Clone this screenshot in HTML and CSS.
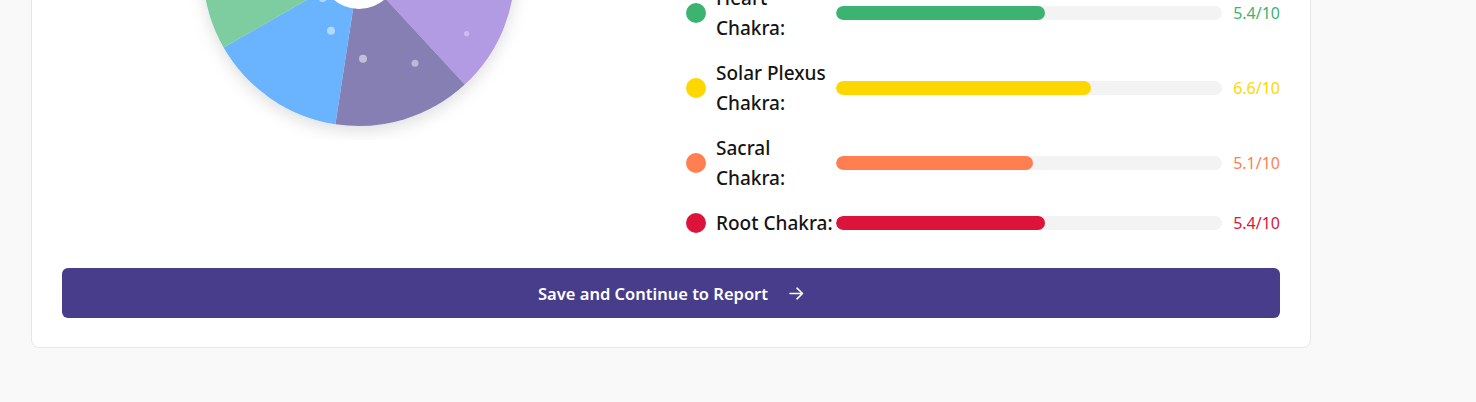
FILE: index.html
```html
<!DOCTYPE html>
<html lang="en">
<head>
<meta charset="utf-8">
<title>Chakra Results</title>
<link rel="stylesheet" href="styles.css">
</head>
<body>
<main class="page">
  <section class="card">
    <div class="results">
      <div class="chart-col">
        <svg class="pie" width="340" height="340" viewBox="0 0 340 340" aria-hidden="true">
          <defs>
            <filter id="shadow" x="-20%" y="-20%" width="140%" height="140%">
              <feDropShadow dx="0" dy="5" stdDeviation="8" flood-color="#000" flood-opacity="0.13"/>
            </filter>
          </defs>
          <g filter="url(#shadow)">
            <path d="M170,170 L325.6,158.8 A156,156 0 0 1 275.8,284.6 Z" fill="#b39be3"/>
            <path d="M170,170 L275.8,284.6 A156,156 0 0 1 146.4,324.2 Z" fill="#857fb3"/>
            <path d="M170,170 L146.4,324.2 A156,156 0 0 1 34.6,247.5 Z" fill="#69b3ff"/>
            <path d="M170,170 L34.6,247.5 A156,156 0 0 1 24.9,112.6 Z" fill="#7dcda0"/>
            <path d="M170,170 L24.9,112.6 A156,156 0 0 1 124.4,20.8 Z" fill="#ffe666"/>
            <path d="M170,170 L124.4,20.8 A156,156 0 0 1 258.4,41.4 Z" fill="#ffa585"/>
            <path d="M170,170 L258.4,41.4 A156,156 0 0 1 325.6,158.8 Z" fill="#e65a77"/>
          </g>
          <circle cx="170" cy="170" r="39" fill="#ffffff"/>
          <circle cx="133.7" cy="198" r="4" fill="#ffffff" fill-opacity="0.5"/>
          <circle cx="142" cy="230.7" r="4" fill="#ffffff" fill-opacity="0.5"/>
          <circle cx="174" cy="258.7" r="4" fill="#ffffff" fill-opacity="0.5"/>
          <circle cx="226" cy="263.3" r="3.5" fill="#ffffff" fill-opacity="0.45"/>
          <circle cx="277.7" cy="233.7" r="2.6" fill="#ffffff" fill-opacity="0.35"/>
        </svg>
      </div>
      <ul class="scores">
        <li class="score">
          <span class="dot heart"></span>
          <span class="label">Heart Chakra:</span>
          <span class="track"><span class="fill heart" style="width:54%"></span></span>
          <span class="value heart-text">5.4/10</span>
        </li>
        <li class="score">
          <span class="dot solar"></span>
          <span class="label">Solar Plexus Chakra:</span>
          <span class="track"><span class="fill solar" style="width:66%"></span></span>
          <span class="value solar-text">6.6/10</span>
        </li>
        <li class="score">
          <span class="dot sacral"></span>
          <span class="label">Sacral Chakra:</span>
          <span class="track"><span class="fill sacral" style="width:51%"></span></span>
          <span class="value sacral-text">5.1/10</span>
        </li>
        <li class="score">
          <span class="dot root"></span>
          <span class="label">Root Chakra:</span>
          <span class="track"><span class="fill root" style="width:54%"></span></span>
          <span class="value root-text">5.4/10</span>
        </li>
      </ul>
    </div>
    <button class="continue" type="button">
      <span>Save and Continue to Report</span>
      <svg class="arrow" width="15" height="13" viewBox="0 0 15 13" aria-hidden="true">
        <path d="M1 6.5h12.5M8 1.2l5.5 5.3L8 11.8" fill="none" stroke="#ffffff" stroke-width="1.6" stroke-linecap="round" stroke-linejoin="round"/>
      </svg>
    </button>
  </section>
</main>
</body>
</html>
```
FILE: styles.css
```css
* {
  box-sizing: border-box;
}

html, body {
  margin: 0;
  padding: 0;
  background: #f9f9f9;
  font-family: "Noto Sans", "Open Sans", Arial, sans-serif;
  color: #1a1a1a;
}

.page {
  padding: 0 0 0 31px;
}

.card {
  width: 1280px;
  margin-top: -48px;
  background: #ffffff;
  border: 1px solid #e6e6e6;
  border-radius: 8px;
  padding: 30px 30px 29px 30px;
}

.results {
  display: grid;
  grid-template-columns: 1fr 1fr;
  column-gap: 30px;
  align-items: start;
}

.chart-col {
  display: flex;
  justify-content: center;
}

.pie {
  display: block;
  margin-top: -183px;
  margin-left: -1px;
}

.scores {
  list-style: none;
  margin: 0;
  padding: 0;
  display: flex;
  flex-direction: column;
  gap: 15px;
}

.score {
  display: flex;
  align-items: center;
}

.dot {
  flex: none;
  width: 20px;
  height: 20px;
  border-radius: 50%;
  margin-right: 10px;
}

.label {
  flex: none;
  width: 120px;
  font-size: 19px;
  font-weight: 500;
  line-height: 30px;
  color: #141414;
}

.track {
  flex: 1;
  height: 14px;
  border-radius: 7px;
  background: #f3f3f3;
  overflow: hidden;
}

.fill {
  display: block;
  height: 100%;
  border-radius: 7px;
}

.value {
  flex: none;
  margin-left: 11px;
  font-size: 16px;
  line-height: 24px;
}

.heart { background: #3cb371; }
.solar { background: #ffd700; }
.sacral { background: #ff7f50; }
.root { background: #dc143c; }

.heart-text { color: #3cb371; }
.solar-text { color: #ffd700; }
.sacral-text { color: #ff7f50; }
.root-text { color: #dc143c; }

.continue {
  display: flex;
  align-items: center;
  justify-content: center;
  gap: 21px;
  width: 100%;
  height: 50px;
  margin-top: 30px;
  border: none;
  border-radius: 6px;
  background: #483d8b;
  color: #ffffff;
  font-family: "Noto Sans", "Open Sans", Arial, sans-serif;
  font-size: 16.5px;
  font-weight: 600;
  cursor: pointer;
}

.arrow {
  display: block;
  flex: none;
}
```
